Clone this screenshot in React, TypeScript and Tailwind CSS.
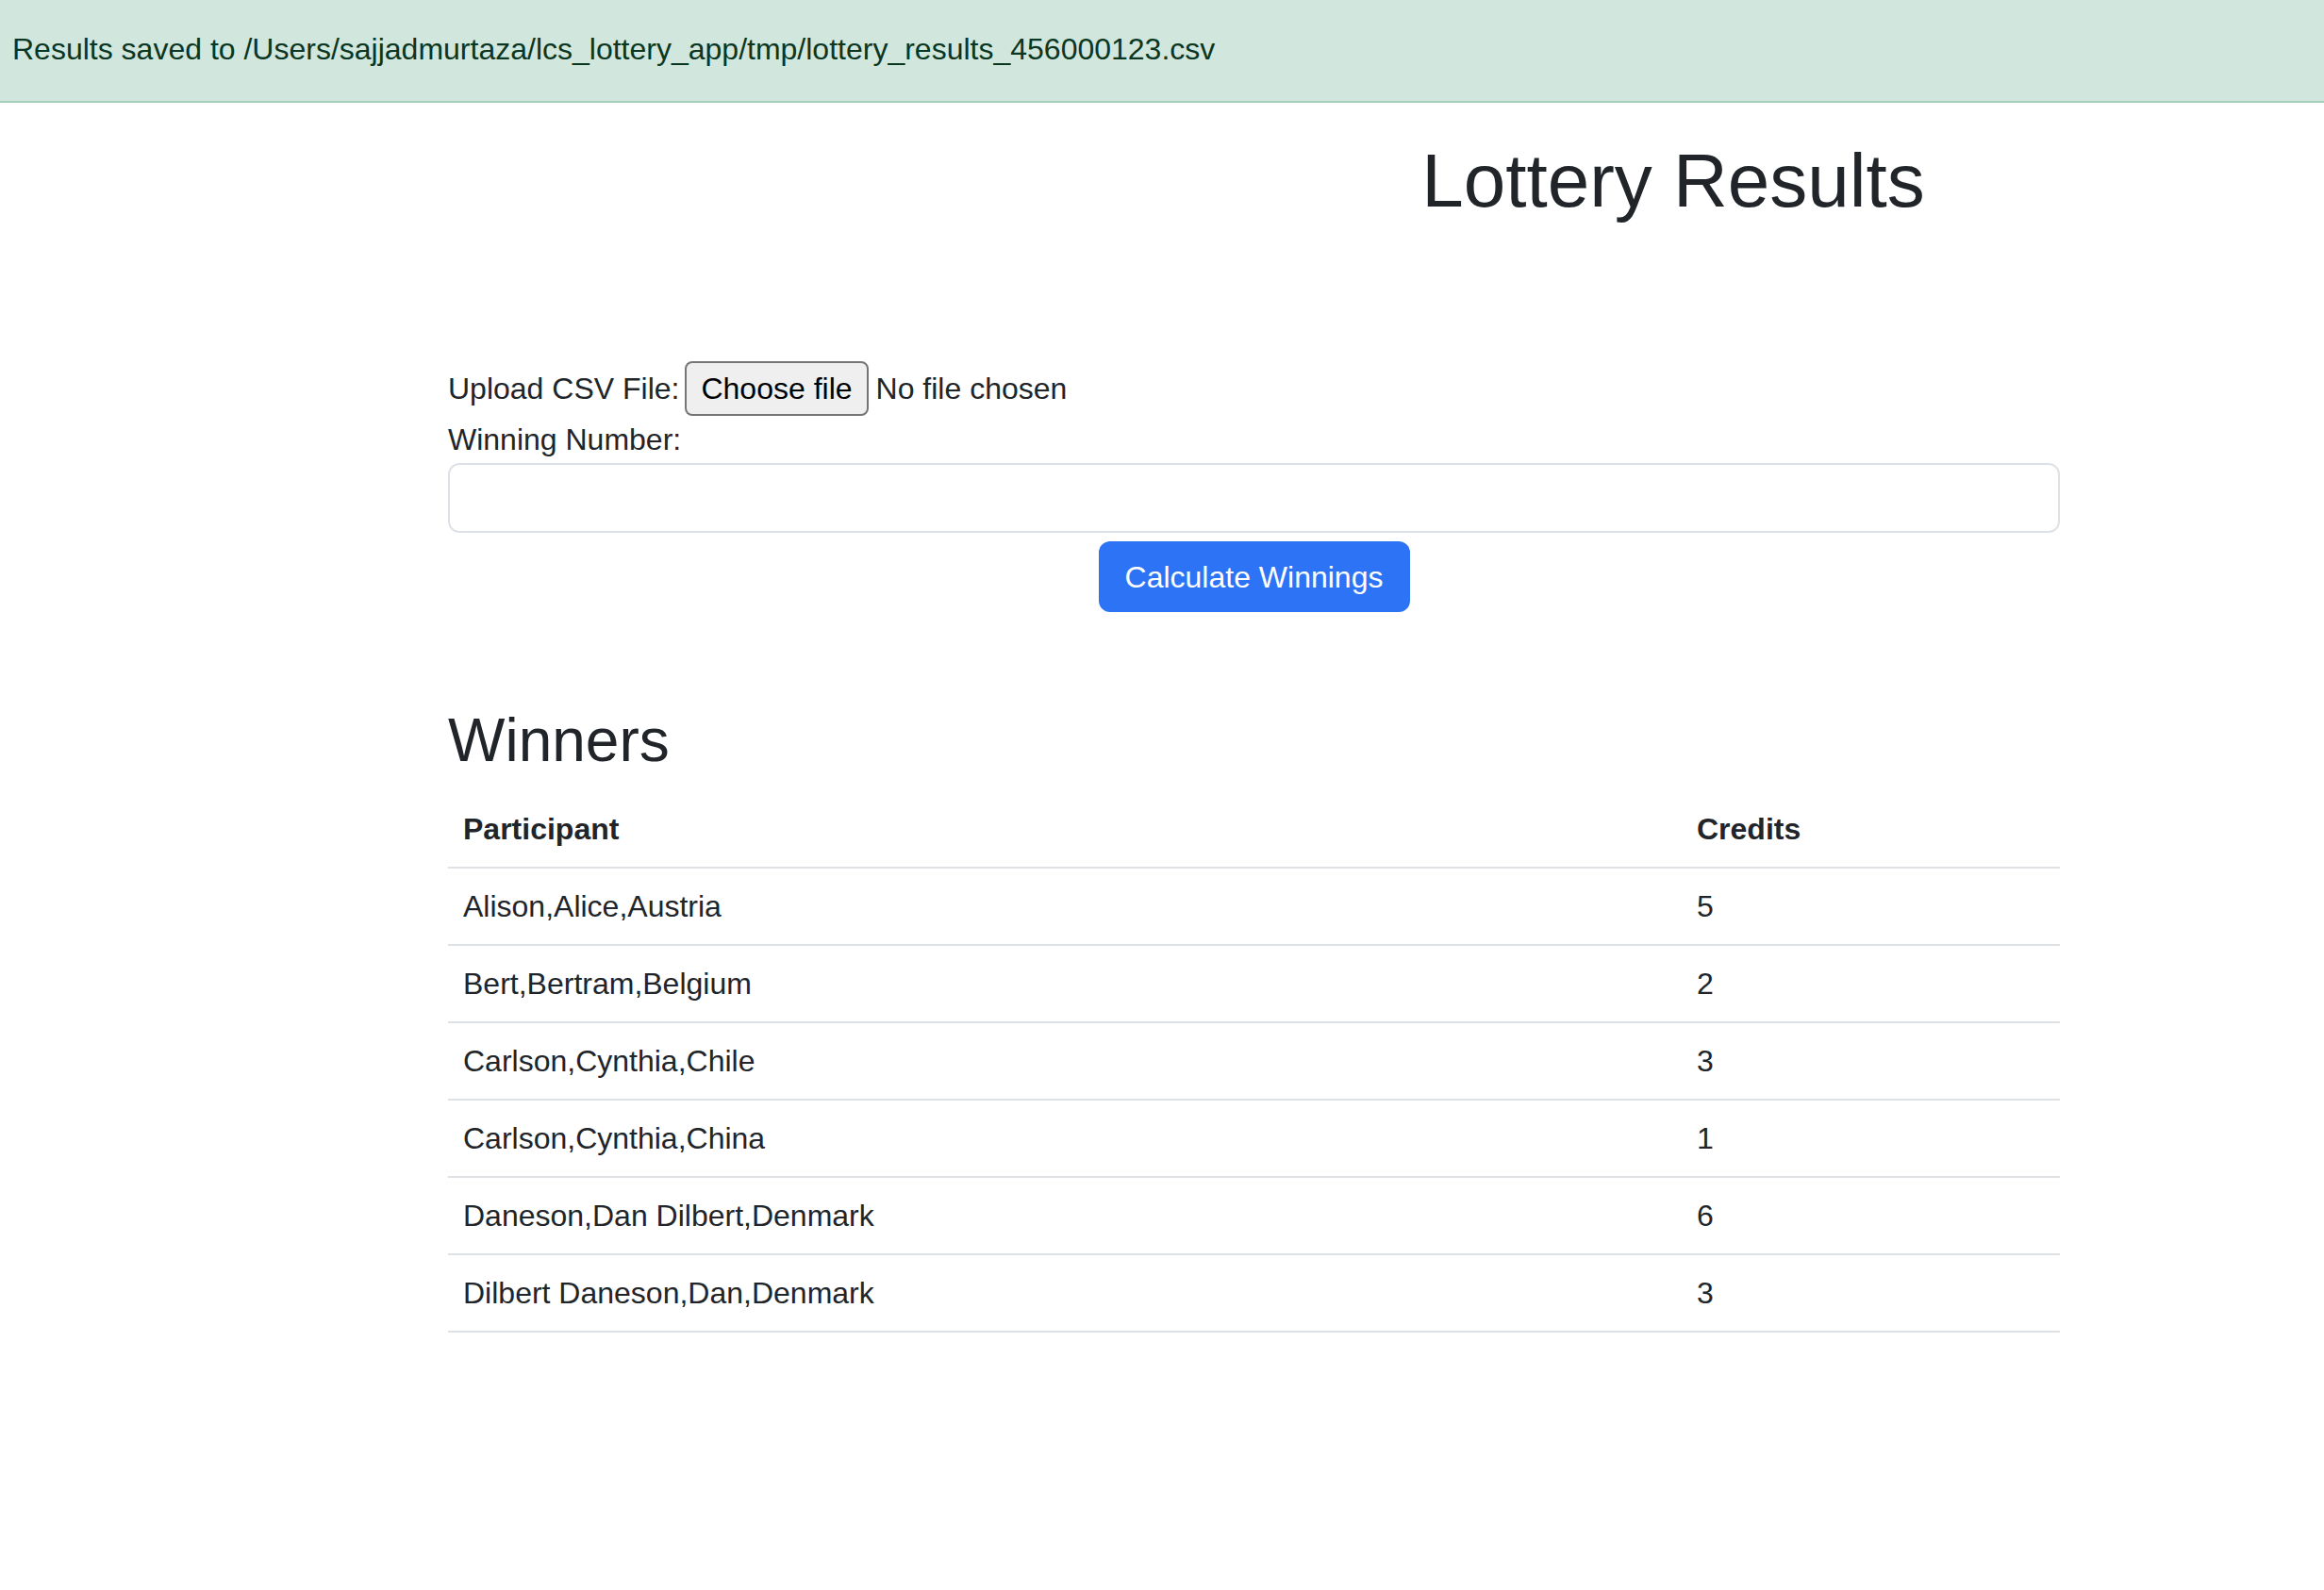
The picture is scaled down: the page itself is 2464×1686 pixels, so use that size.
import React from 'react';

type Winner = {
  participant: string;
  credits: number;
};

const winners: Winner[] = [
  { participant: 'Alison,Alice,Austria', credits: 5 },
  { participant: 'Bert,Bertram,Belgium', credits: 2 },
  { participant: 'Carlson,Cynthia,Chile', credits: 3 },
  { participant: 'Carlson,Cynthia,China', credits: 1 },
  { participant: 'Daneson,Dan Dilbert,Denmark', credits: 6 },
  { participant: 'Dilbert Daneson,Dan,Denmark', credits: 3 },
];

const FileField: React.FC = () => (
  <div className="flex items-center h-[58px]">
    <span className="mr-[6px]">Upload CSV File:</span>
    <span className="h-[58px] px-[15px] flex items-center border-2 border-[#767676] rounded-[8px] bg-[#efefef] text-black">
      Choose file
    </span>
    <span className="ml-[8px]">No file chosen</span>
  </div>
);

const WinnersTable: React.FC<{ rows: Winner[] }> = ({ rows }) => (
  <table className="w-full border-collapse text-left">
    <thead>
      <tr className="border-b-2 border-[#dee2e6]">
        <th className="w-[1308px] px-[16px] py-[16px] font-bold leading-[48px]">Participant</th>
        <th className="px-[16px] py-[16px] font-bold leading-[48px]">Credits</th>
      </tr>
    </thead>
    <tbody>
      {rows.map((row) => (
        <tr key={row.participant} className="border-b-2 border-[#dee2e6]">
          <td className="px-[16px] py-[16px] leading-[48px]">{row.participant}</td>
          <td className="px-[16px] py-[16px] leading-[48px]">{row.credits}</td>
        </tr>
      ))}
    </tbody>
  </table>
);

export default function App() {
  return (
    <div className="min-h-screen bg-white text-[#212529] text-[32px] leading-[48px] font-['Liberation_Sans',Arial,sans-serif]">
      <div className="bg-[#d1e7dd] text-[#0a3622] border-b-2 border-[#a3cfbb] pl-[13px] pt-[28px] pb-[31px]">
        Results saved to /Users/sajjadmurtaza/lcs_lottery_app/tmp/lottery_results_456000123.csv
      </div>

      <div className="pl-[1084px] mt-[35px] text-center">
        <h1 className="text-[80px] leading-[96px] font-medium">Lottery Results</h1>
      </div>

      <div className="ml-[475px] w-[1709px] mt-[143px]">
        <form className="flex flex-col">
          <FileField />
          <label className="leading-[48px] mt-[1px]">Winning Number:</label>
          <input
            type="text"
            className="mt-[1px] h-[74px] w-full border-2 border-[#dee2e6] rounded-[12px] px-[24px] outline-none"
          />
          <div className="flex justify-center mt-[9px]">
            <button
              type="button"
              className="w-[330px] h-[75px] rounded-[12px] bg-[#2d73f5] text-white"
            >
              Calculate Winnings
            </button>
          </div>
        </form>

        <h2 className="mt-[98px] mb-[15px] text-[64px] leading-[77px] font-medium">Winners</h2>
        <WinnersTable rows={winners} />
      </div>
    </div>
  );
}
